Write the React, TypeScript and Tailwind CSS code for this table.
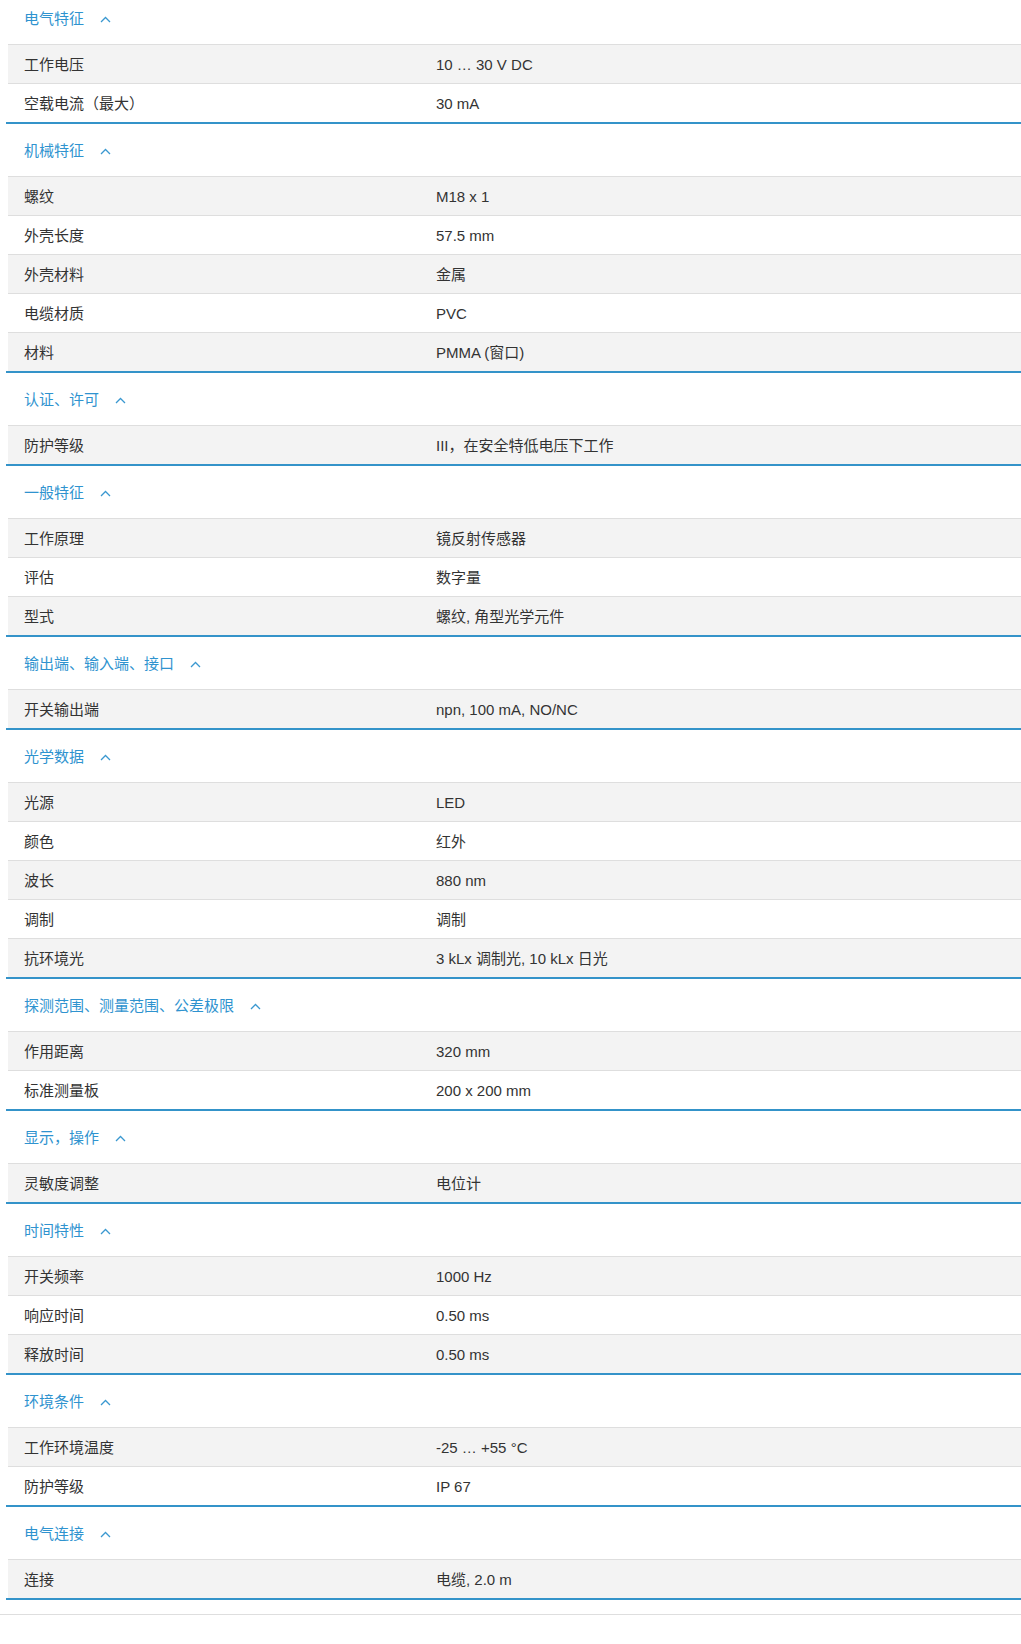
import React from "react";

type Spec = { title: string; rows: [string, string][] };

const SPECS: Spec[] = [
  {
    title: "电气特征",
    rows: [
      ["工作电压", "10 … 30 V DC"],
      ["空载电流（最大）", "30 mA"],
    ],
  },
  {
    title: "机械特征",
    rows: [
      ["螺纹", "M18 x 1"],
      ["外壳长度", "57.5 mm"],
      ["外壳材料", "金属"],
      ["电缆材质", "PVC"],
      ["材料", "PMMA (窗口)"],
    ],
  },
  {
    title: "认证、许可",
    rows: [["防护等级", "III，在安全特低电压下工作"]],
  },
  {
    title: "一般特征",
    rows: [
      ["工作原理", "镜反射传感器"],
      ["评估", "数字量"],
      ["型式", "螺纹, 角型光学元件"],
    ],
  },
  {
    title: "输出端、输入端、接口",
    rows: [["开关输出端", "npn, 100 mA, NO/NC"]],
  },
  {
    title: "光学数据",
    rows: [
      ["光源", "LED"],
      ["颜色", "红外"],
      ["波长", "880 nm"],
      ["调制", "调制"],
      ["抗环境光", "3 kLx 调制光, 10 kLx 日光"],
    ],
  },
  {
    title: "探测范围、测量范围、公差极限",
    rows: [
      ["作用距离", "320 mm"],
      ["标准测量板", "200 x 200 mm"],
    ],
  },
  {
    title: "显示，操作",
    rows: [["灵敏度调整", "电位计"]],
  },
  {
    title: "时间特性",
    rows: [
      ["开关频率", "1000 Hz"],
      ["响应时间", "0.50 ms"],
      ["释放时间", "0.50 ms"],
    ],
  },
  {
    title: "环境条件",
    rows: [
      ["工作环境温度", "-25 … +55 °C"],
      ["防护等级", "IP 67"],
    ],
  },
  {
    title: "电气连接",
    rows: [["连接", "电缆, 2.0 m"]],
  },
];

function ChevronUp() {
  return (
    <svg width="11" height="7" viewBox="0 0 11 7" fill="none" className="ml-4 mt-[1px]">
      <polyline points="1,6 5.5,1.5 10,6" stroke="#3a98d0" strokeWidth="1.3" />
    </svg>
  );
}

function Section({ spec }: { spec: Spec }) {
  return (
    <div className="border-b-2 border-[#3493c9]">
      <div className="h-[52px] flex items-center pl-[18px] pt-[2px]">
        <span className="text-[15px] leading-5 text-[#2f93cf]">{spec.title}</span>
        <ChevronUp />
      </div>
      <div className="ml-[2px]">
        {spec.rows.map(([label, value], i) => (
          <div
            key={label + i}
            className={`h-[39px] flex items-center pt-[2px] border-t border-[#dedede] text-[15px] leading-5 text-[#333] ${
              i % 2 === 0 ? "bg-[#f3f3f3]" : "bg-white"
            }`}
          >
            <div className="w-[412px] pl-4 shrink-0">{label}</div>
            <div className="pl-4">{value}</div>
          </div>
        ))}
      </div>
    </div>
  );
}

export default function App() {
  return (
    <div
      className="w-[1021px] h-[1644px] overflow-hidden bg-white"
      style={{ fontFamily: '"Liberation Sans", "Noto Sans CJK SC", sans-serif' }}
    >
      <div className="-mt-[8px] pl-[6px]">
        {SPECS.map((s) => (
          <Section key={s.title} spec={s} />
        ))}
      </div>
      <div className="mt-[14px] border-t border-[#dedede]" />
    </div>
  );
}
